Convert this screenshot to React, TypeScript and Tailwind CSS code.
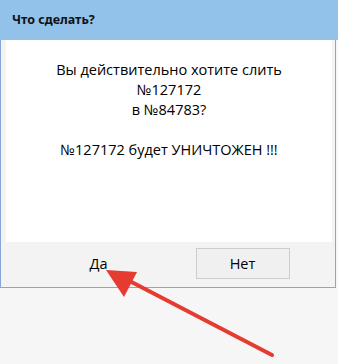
export default function App() {
  return (
    <div className="relative w-[338px] h-[364px] bg-[#f6f6f6] overflow-hidden font-['Open_Sans','Noto_Sans',sans-serif] text-black">
      <div className="h-10 w-[338px] bg-[#92c2ea] flex items-center pl-3">
        <span className="text-[12.5px] font-bold text-[#111] font-['Noto_Sans',sans-serif]">Что сделать?</span>
      </div>
      <div className="w-[336px] h-[248px] bg-[#f3f3f3] border-x border-b border-[#83a7d9] pl-[5px] pr-[3px] flex flex-col">
        <div className="h-[202px] bg-white flex flex-col items-center pt-[20px] text-[14.5px] leading-[20px] text-center">
          <div>Вы действительно хотите слить</div>
          <div>№127172</div>
          <div>в №84783?</div>
          <div>&nbsp;</div>
          <div>№127172 будет УНИЧТОЖЕН !!!</div>
        </div>
        <div className="flex justify-center gap-[50px] pt-[6px] pl-[3px]">
          <button className="w-[94px] h-[31px] text-[14.5px] flex items-center justify-center">Да</button>
          <button className="w-[94px] h-[31px] text-[14.5px] flex items-center justify-center border border-[#cccccc] bg-[#f0f0f0]">Нет</button>
        </div>
      </div>
      <svg className="absolute left-0 top-0" width="338" height="364" viewBox="0 0 338 364">
        <line x1="272" y1="355" x2="120" y2="276" stroke="#e53b30" strokeWidth="4" strokeLinecap="round" />
        <polygon points="106,270 137,272 124,297" fill="#e53b30" />
      </svg>
    </div>
  );
}
